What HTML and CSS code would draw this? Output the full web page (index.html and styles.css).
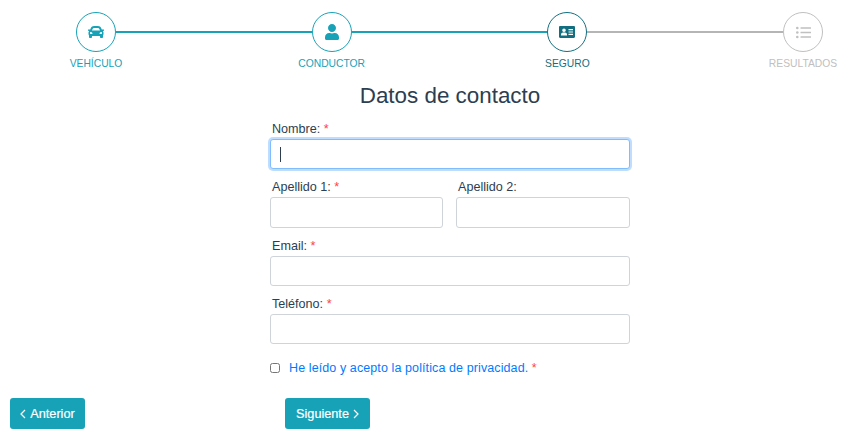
FILE: index.html
```html
<!DOCTYPE html>
<html lang="es">
<head>
<meta charset="utf-8">
<title>Datos de contacto</title>
<link rel="stylesheet" href="styles.css">
</head>
<body>
<nav class="stepper">
  <div class="circle done">
    <svg class="icon" width="16" height="16" viewBox="0 0 512 512"><path fill="currentColor" d="M499.99 176h-59.87l-16.64-41.6C406.38 91.63 365.57 64 319.5 64h-127c-46.06 0-86.88 27.63-103.99 70.4L71.87 176H12.01C4.2 176-1.53 183.34.37 190.91l6 24C7.7 220.25 12.5 224 18.01 224h20.07C24.65 235.73 16 252.78 16 272v48c0 16.12 6.16 30.67 16 41.93V416c0 17.67 14.33 32 32 32h32c17.67 0 32-14.33 32-32v-32h256v32c0 17.67 14.33 32 32 32h32c17.67 0 32-14.33 32-32v-54.07c9.84-11.25 16-25.8 16-41.93v-48c0-19.22-8.65-36.27-22.07-48H494c5.51 0 10.31-3.75 11.64-9.09l6-24c1.89-7.57-3.84-14.91-11.65-14.91zm-352.06-17.83c7.29-18.22 24.94-30.17 44.57-30.17h127c19.63 0 37.28 11.95 44.57 30.17L384 208H128l19.93-49.83zM96 319.8c-19.2 0-32-12.76-32-31.9S76.8 256 96 256s48 28.71 48 47.85-28.8 15.95-48 15.95zm320 0c-19.2 0-48 3.19-48-15.95S396.8 256 416 256s32 12.76 32 31.9-12.8 31.9-32 31.9z"/></svg>
  </div>
  <div class="line done-line"></div>
  <div class="circle done">
    <svg class="icon" width="14" height="16" viewBox="0 0 448 512"><path fill="currentColor" d="M224 256c70.7 0 128-57.3 128-128S294.7 0 224 0 96 57.3 96 128s57.3 128 128 128zm89.6 32h-16.7c-22.2 10.2-46.9 16-72.9 16s-50.6-5.8-72.9-16h-16.7C60.2 288 0 348.2 0 422.4V464c0 26.5 21.5 48 48 48h352c26.5 0 48-21.5 48-48v-41.6c0-74.2-60.2-134.4-134.4-134.4z"/></svg>
  </div>
  <div class="line done-line"></div>
  <div class="circle current">
    <svg class="icon" width="16" height="12" viewBox="0 0 16 12"><path fill="currentColor" fill-rule="evenodd" d="M1.2 0h13.6C15.5 0 16 .5 16 1.2v9.6c0 .7-.5 1.2-1.2 1.2H1.2C.5 12 0 11.500 0 10.800V1.200C0 .5.500 0 1.200 0zM5 2.500a1.800 1.800 0 1 0 0 3.600 1.800 1.800 0 0 0 0-3.600zM2 9.500h6V8.500C8 7.300 7 6.500 6 6.500H4C3 6.500 2 7.300 2 8.500zM9.500 3v1.200h4.500V3zM9.500 5.400v1.200h4.500V5.400zM9.500 7.800v1.200h4.500V7.800z"/></svg>
  </div>
  <div class="line todo-line"></div>
  <div class="circle todo">
    <svg class="icon" width="15" height="13" viewBox="0 0 15 13"><g fill="currentColor"><circle cx="1.300" cy="2" r="1.300"/><circle cx="1.300" cy="6.500" r="1.300"/><circle cx="1.300" cy="11" r="1.300"/><rect x="4.500" y="1.200" width="10.500" height="1.600" rx=".4"/><rect x="4.500" y="5.700" width="10.500" height="1.600" rx=".4"/><rect x="4.500" y="10.200" width="10.500" height="1.600" rx=".4"/></g></svg>
  </div>
  <span class="step-label label-1">VEHÍCULO</span>
  <span class="step-label label-2">CONDUCTOR</span>
  <span class="step-label label-3">SEGURO</span>
  <span class="step-label label-4">RESULTADOS</span>
</nav>

<main>
  <h1 class="title">Datos de contacto</h1>
  <form class="form">
    <div class="field">
      <label class="label" for="nombre">Nombre: <span class="req">*</span></label>
      <div class="input-wrap">
        <input class="input focused" id="nombre" type="text">
        <span class="caret"></span>
      </div>
    </div>
    <div class="pair">
      <div class="field">
        <label class="label" for="ap1">Apellido 1: <span class="req">*</span></label>
        <input class="input tall" id="ap1" type="text">
      </div>
      <div class="field">
        <label class="label" for="ap2">Apellido 2:</label>
        <input class="input tall" id="ap2" type="text">
      </div>
    </div>
    <div class="field">
      <label class="label" for="email">Email: <span class="req">*</span></label>
      <input class="input" id="email" type="text">
    </div>
    <div class="field">
      <label class="label" for="tel">Teléfono: <span class="req">*</span></label>
      <input class="input" id="tel" type="text">
    </div>
    <div class="consent">
      <input class="check" id="priv" type="checkbox">
      <label for="priv"><a class="link" href="#">He leído y acepto la política de privacidad.</a> <span class="req">*</span></label>
    </div>
  </form>
</main>

<footer class="actions">
  <button class="btn" type="button"><svg class="chev" width="6" height="10" viewBox="0 0 6 10"><path d="M5 1 1 5l4 4" fill="none" stroke="currentColor" stroke-width="1.200"/></svg>Anterior</button>
  <button class="btn btn-next" type="button">Siguiente<svg class="chev" width="6" height="10" viewBox="0 0 6 10"><path d="m1 1 4 4-4 4" fill="none" stroke="currentColor" stroke-width="1.200"/></svg></button>
</footer>
</body>
</html>
```

FILE: styles.css
```css
* { box-sizing: border-box; }
html, body { margin: 0; padding: 0; }
body {
  width: 856px;
  height: 435px;
  overflow: hidden;
  background: #fff;
  font-family: "Liberation Sans", Arial, sans-serif;
  color: #2c3e50;
}
.stepper {
  display: grid;
  grid-template-columns: 40px 1fr 40px 1fr 40px 1fr 40px;
  grid-template-rows: 40px auto;
  align-items: center;
  padding: 12px 33px 0 76px;
}
.circle {
  width: 40px;
  height: 40px;
  border-radius: 50%;
  border: 1px solid;
  display: flex;
  align-items: center;
  justify-content: center;
  grid-row: 1;
}
.icon { display: block; }
.done { border-color: #17a2b8; color: #17a2b8; }
.current { border-color: #136f80; color: #136f80; }
.todo { border-color: #c0c0c0; color: #c0c0c0; }
.line { height: 2px; grid-row: 1; }
.done-line { background: #17a2b8; }
.todo-line { background: #b5b5b5; }
.step-label {
  grid-row: 2;
  justify-self: center;
  white-space: nowrap;
  font-size: 10.300px;
  line-height: 12px;
  margin-top: 6px;
  color: #17a2b8;
}
.label-1 { grid-column: 1; }
.label-2 { grid-column: 3; }
.label-3 { grid-column: 5; color: #136f80; }
.label-4 { grid-column: 7; color: #c0c0c0; }
main { width: 360px; margin-left: 270px; }
.title {
  margin: 13px 0 0;
  font-size: 22.400px;
  font-weight: 400;
  line-height: 26px;
  text-align: center;
  color: #2c3e50;
  white-space: nowrap;
}
.form { display: flex; flex-direction: column; gap: 11px; margin-top: 13px; }
.field { display: flex; flex-direction: column; min-width: 0; }
.label {
  font-size: 12.600px;
  line-height: 14px;
  margin: 0 0 3px 2px;
  color: #2c3e50;
  white-space: nowrap;
}
.req { color: #f44; }
.input-wrap { position: relative; }
.input {
  display: block;
  width: 100%;
  height: 30px;
  padding: 0 9px;
  border: 1px solid #ced4da;
  border-radius: 3px;
  background: #fff;
  font: 14px "Liberation Sans", Arial, sans-serif;
  color: #2c3e50;
  outline: none;
}
.tall { height: 31px; }
.focused {
  border-color: #80bdff;
  box-shadow: 0 0 0 2px rgba(0, 123, 255, .25);
}
.caret {
  position: absolute;
  left: 10px;
  top: 8px;
  width: 1px;
  height: 15px;
  background: #2c3e50;
}
.pair { display: grid; grid-template-columns: 173px 174px; column-gap: 13px; }
.consent {
  display: flex;
  align-items: center;
  gap: 9px;
  margin-top: 6px;
  font-size: 12.500px;
  line-height: 14px;
}
.check { width: 10px; height: 10px; margin: 0; }
.link { color: #007bff; text-decoration: none; letter-spacing: .1px; }
.actions {
  display: flex;
  gap: 200px;
  padding-left: 10px;
  margin-top: 23px;
}
.btn {
  display: flex;
  align-items: center;
  justify-content: center;
  gap: 4px;
  width: 75px;
  height: 31px;
  padding: 0;
  border: 0;
  border-radius: 3px;
  background: #17a2b8;
  color: #fff;
  font: 12.700px "Liberation Sans", Arial, sans-serif;
  -webkit-text-stroke: .2px #fff;
}
.btn-next { width: 85px; }
```
